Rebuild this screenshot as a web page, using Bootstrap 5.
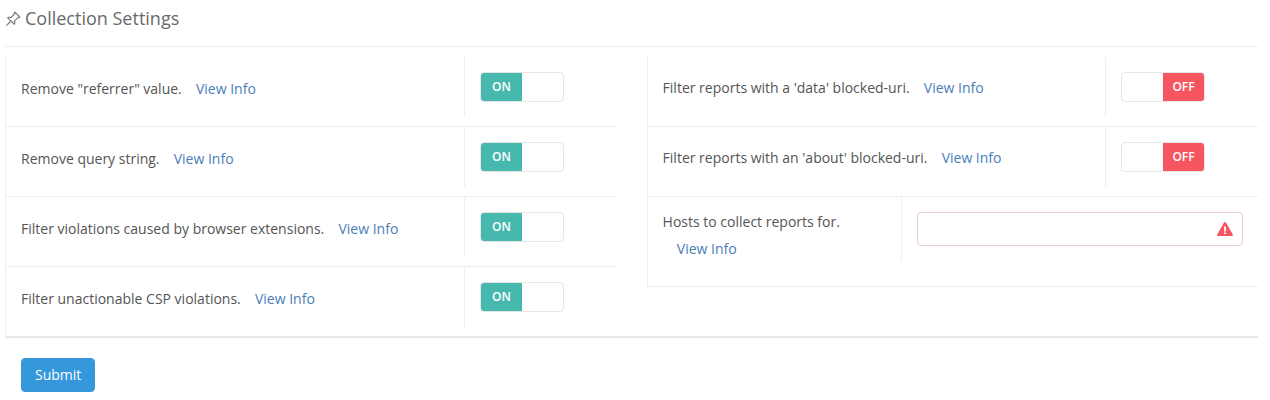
<!DOCTYPE html>
<html lang="en">
<head>
<meta charset="utf-8">
<title>Collection Settings</title>
<link href="https://cdn.jsdelivr.net/npm/bootstrap@5.3.0/dist/css/bootstrap.min.css" rel="stylesheet">
<style>
body{font-family:"Open Sans","Noto Sans",sans-serif;font-size:14px;color:#555;background:#fff;padding:0 12px 0 5px}
.sheet-head{height:47px;border-bottom:1px solid #eee;gap:4px;padding-top:6px}
.sheet-head h1{font-size:18px;font-weight:400;color:#676a6c;margin:0;line-height:25px}
.sheet-head svg{width:16px;height:16px;color:#777;margin-top:5px}
.sheet-head path{stroke:currentColor;stroke-width:.25}
.sheet-body{padding-top:10px;border-bottom:2px solid #e9e9e9;gap:31px}
.side-a{width:611px;border-left:1px solid #eee}
.side-b{flex:1;border-left:1px solid #eee;height:230px}
.opt-row{height:70px;border-bottom:1px solid #eee}
.opt-row.tall{height:90px}
.side-a .opt-row:last-child{border-bottom:0;height:69px}
.opt-label{height:60px;padding:0 0 0 15px;border-right:1px solid #eee;flex:none;display:flex;align-items:center}
.side-a .opt-label{width:459px;padding-top:2px}
.side-b .opt-label{width:458px;padding-left:14.6px}
.side-b .opt-row.tall .opt-label{width:254px;height:64px;display:block;padding-top:15px}
.opt-label a{color:#4a7eb8;text-decoration:none;margin-left:14.2px}
.opt-row.tall .opt-label span,.opt-row.tall .opt-label a{display:block;line-height:20px}
.opt-row.tall .opt-label a{margin-top:7px}
.flip{width:84px;height:30px;margin:15px 0 0 15px;border:1px solid #e6e6e6;border-radius:4px;overflow:hidden;font-size:12px;font-weight:600;line-height:28px;text-align:center;color:#fff}
.flip-on,.flip-off{width:41px;height:28px}
.flip-on{background:#47b8ae}
.flip-off{background:#f6565f;margin-left:41px}
.warn-field{margin:15px 0 0 15px;width:326px;height:34px}
.warn-field input{height:34px;border:1px solid #efcbd3;border-radius:4px;box-shadow:none;padding-right:30px}
.warn-field svg{position:absolute;right:10px;top:10px;width:16px;height:14px}
.send-btn{background:#3498db;border-color:#3498db;color:#fff;font-size:14px;line-height:20px;padding:6px 13px;border-radius:4px;margin:20px 0 0 16px}
</style>
</head>
<body>
<div class="sheet-head d-flex align-items-start">
<svg viewBox="0 0 16 16" fill="currentColor"><path d="M9.828.722a.5.5 0 0 1 .354.146l4.95 4.95a.5.5 0 0 1 0 .707c-.48.48-1.072.588-1.503.588-.177 0-.335-.018-.46-.039l-3.134 3.134a5.927 5.927 0 0 1 .16 1.013c.046.702-.032 1.687-.72 2.375a.5.5 0 0 1-.707 0l-2.829-2.828-3.182 3.182c-.195.195-1.219.902-1.414.707-.195-.195.512-1.22.707-1.414l3.182-3.182-2.828-2.829a.5.5 0 0 1 0-.707c.688-.688 1.673-.767 2.375-.72a5.922 5.922 0 0 1 1.013.16l3.134-3.133a2.772 2.772 0 0 1-.04-.461c0-.43.108-1.022.589-1.503a.5.5 0 0 1 .353-.146zm.122 2.112v-.002.002zm0-.002v.002a.5.5 0 0 1-.122.51L6.293 6.878a.5.5 0 0 1-.511.12H5.78l-.014-.004a4.507 4.507 0 0 0-.288-.076 4.922 4.922 0 0 0-.765-.116c-.422-.028-.836.008-1.175.15l5.51 5.509c.141-.34.177-.753.149-1.175a4.924 4.924 0 0 0-.192-1.054l-.004-.013v-.001a.5.5 0 0 1 .12-.512l3.536-3.535a.5.5 0 0 1 .532-.115l.096.022c.087.017.208.034.344.034.114 0 .23-.011.343-.04L9.927 2.028c-.029.113-.04.23-.04.343a1.779 1.779 0 0 0 .062.46z"/></svg>
<h1>Collection Settings</h1>
</div>
<div class="sheet-body d-flex">
<div class="side-a">
<div class="opt-row d-flex"><div class="opt-label"><span>Remove "referrer" value.</span><a href="#">View Info</a></div><div class="flip"><div class="flip-on">ON</div></div></div>
<div class="opt-row d-flex"><div class="opt-label"><span>Remove query string.</span><a href="#">View Info</a></div><div class="flip"><div class="flip-on">ON</div></div></div>
<div class="opt-row d-flex"><div class="opt-label"><span>Filter violations caused by browser extensions.</span><a href="#">View Info</a></div><div class="flip"><div class="flip-on">ON</div></div></div>
<div class="opt-row d-flex"><div class="opt-label"><span>Filter unactionable CSP violations.</span><a href="#">View Info</a></div><div class="flip"><div class="flip-on">ON</div></div></div>
</div>
<div class="side-b">
<div class="opt-row d-flex"><div class="opt-label"><span>Filter reports with a 'data' blocked-uri.</span><a href="#">View Info</a></div><div class="flip"><div class="flip-off">OFF</div></div></div>
<div class="opt-row d-flex"><div class="opt-label"><span>Filter reports with an 'about' blocked-uri.</span><a href="#">View Info</a></div><div class="flip"><div class="flip-off">OFF</div></div></div>
<div class="opt-row tall d-flex"><div class="opt-label"><span>Hosts to collect reports for.</span><a href="#">View Info</a></div><div class="warn-field position-relative"><input class="form-control" type="text" aria-label="Hosts"><svg viewBox="0 0 16 14"><path fill="#f6565f" fill-rule="evenodd" d="M8 0c.5 0 .8.2 1 .6l6.8 12c.4.7 0 1.4-.8 1.4H1c-.8 0-1.2-.7-.8-1.4L7 .6C7.2.2 7.5 0 8 0zM7 4.5l.2 5h1.6l.2-5H7zm0 6V12h2v-1.5H7z"/></svg></div></div>
</div>
</div>
<button class="btn send-btn" type="button">Submit</button>
<script src="https://cdn.jsdelivr.net/npm/bootstrap@5.3.0/dist/js/bootstrap.bundle.min.js"></script>
</body>
</html>
